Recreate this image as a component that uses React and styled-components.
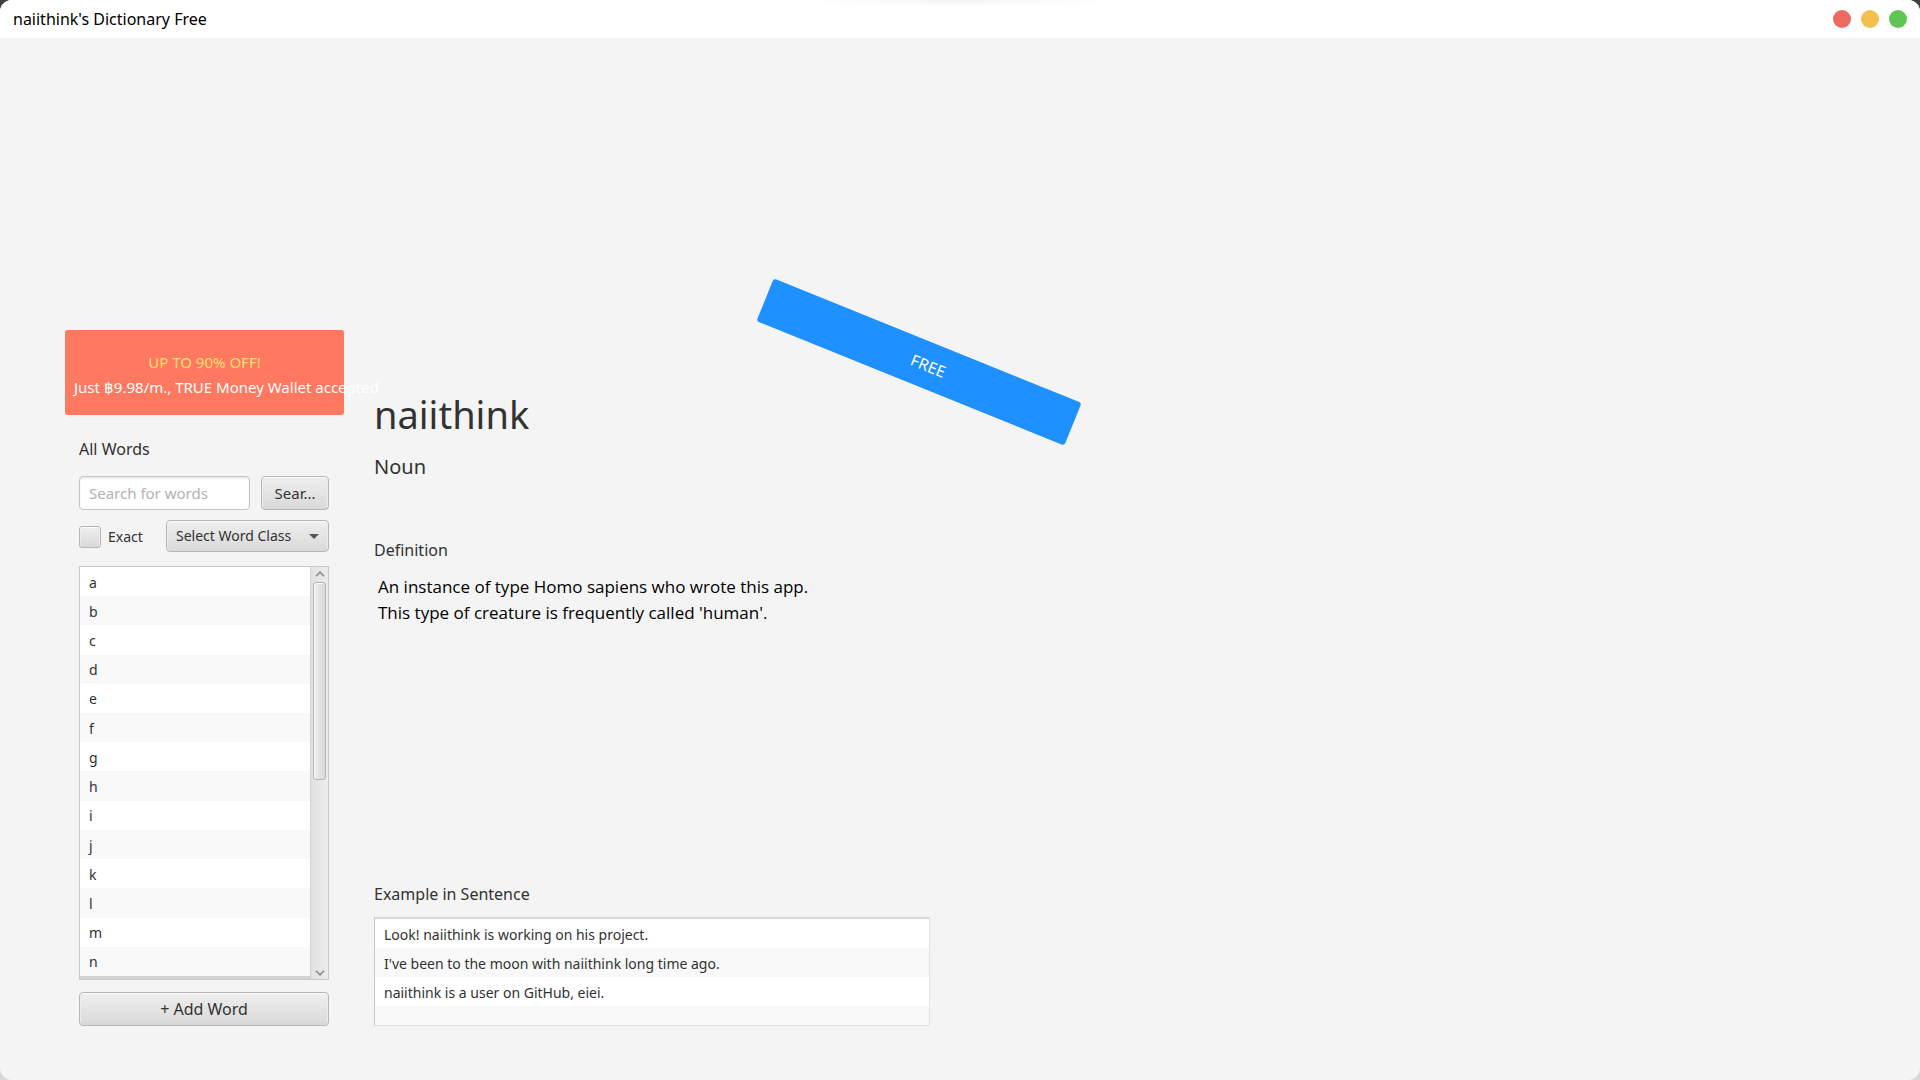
import React, { useState } from "react";
import styled, { createGlobalStyle } from "styled-components";

const GlobalStyle = createGlobalStyle`
  *, *::before, *::after { box-sizing: border-box; }
  body {
    margin: 0;
    background: linear-gradient(#3c3f43 50%, #d8d8d8 50%);
    color: #323232;
    font: 14px/20px "Noto Sans", "Open Sans", sans-serif;
  }
  button, input, select { font: inherit; color: inherit; margin: 0; }
  h1, h2, p, ul { margin: 0; padding: 0; font-weight: 400; }
  ul { list-style: none; }
`;

const Window = styled.div`
  min-height: 100vh;
  display: flex;
  flex-direction: column;
  background: #f4f4f4;
  border-radius: 12px;
  overflow: hidden;
`;

const TitleBar = styled.header`
  height: 38px;
  flex: none;
  display: flex;
  align-items: center;
  justify-content: space-between;
  padding: 0 13px;
  color: #000;
  background:
    radial-gradient(ellipse 160px 6px at 50% 0, #f3f3f3, #fff) no-repeat,
    #fff;
`;

const AppTitle = styled.span`
  font-size: 16px;
  line-height: 24px;
`;

const WindowControls = styled.div`
  display: flex;
  gap: 10px;
`;

const ControlDot = styled.button`
  width: 18px;
  height: 18px;
  padding: 0;
  border: 0;
  border-radius: 50%;
  background: ${(p) => p.$color};
`;

const Main = styled.main`
  flex: 1;
  display: flex;
  align-items: flex-end;
  gap: 30px;
  padding: 0 65px 54px;
`;

const Sidebar = styled.aside`
  width: 279px;
  flex: none;
`;

const Promo = styled.section`
  height: 85px;
  padding: 20px 9px 0;
  border-radius: 3px;
  background: #ff7860;
  color: #fff;
  font-size: 15px;
  line-height: 25px;
  white-space: nowrap;
`;

const PromoHeadline = styled.p`
  color: #ffde6e;
  text-align: center;
`;

const SidePanel = styled.div`
  display: flex;
  flex-direction: column;
  padding: 22px 15px 0 14px;
`;

const SectionTitle = styled.h2`
  font-size: 16px;
  line-height: 24px;
`;

const SearchRow = styled.form`
  display: flex;
  gap: 11px;
  margin-top: 15px;
`;

const SearchInput = styled.input`
  flex: 1;
  min-width: 0;
  height: 34px;
  padding: 0 9px;
  border: 1px solid #c4c4c4;
  border-radius: 4px;
  background: #fff;
  box-shadow: inset 0 2px 2px #ededed;
  font-size: 15px;
  &::placeholder { color: #b2b2b2; opacity: 1; }
`;

const raised = `
  border: 1px solid #b6b6b6;
  border-radius: 4px;
  background: linear-gradient(#efefef, #d9d9d9);
  box-shadow: inset 0 1px 0 #fbfbfb, inset 1px 0 0 #ececec, inset -1px 0 0 #ececec;
`;

const Button = styled.button`
  ${raised}
  width: ${(p) => (p.$wide ? "100%" : "68px")};
  height: 34px;
  padding: 0;
  margin-top: ${(p) => (p.$wide ? "12px" : "0")};
  font-size: ${(p) => (p.$wide ? "16px" : "15px")};
`;

const FilterRow = styled.div`
  display: flex;
  align-items: center;
  justify-content: space-between;
  margin: 10px 0 14px;
`;

const CheckLabel = styled.label`
  display: flex;
  align-items: center;
  gap: 7px;
  padding-top: 2px;
`;

const Checkbox = styled.input`
  ${raised}
  appearance: none;
  width: 22px;
  height: 22px;
  border-radius: 3px;
  &:checked { background: #8a8a8a; }
`;

const SelectBox = styled.div`
  display: grid;
  width: 163px;
  align-items: center;
  > * { grid-area: 1 / 1; }
`;

const Select = styled.select`
  ${raised}
  appearance: none;
  width: 100%;
  height: 32px;
  padding: 0 30px 0 9px;
`;

const SelectArrow = styled.svg`
  justify-self: end;
  margin-right: 10px;
  pointer-events: none;
`;

const WordPane = styled.div`
  display: flex;
  height: 414px;
  border: 1px solid #c8c8c8;
  background: #fff;
`;

const WordList = styled.ul`
  flex: 1;
  display: grid;
  grid-auto-rows: 1fr;
  border-bottom: 3px solid #d3d3d3;
`;

const Row = styled.li`
  display: flex;
  align-items: center;
  padding: 2px 0 0 9px;
  background: #fff;
  &:nth-child(even) { background: #f9f9f9; }
`;

const ScrollBar = styled.div`
  width: 18px;
  display: flex;
  flex-direction: column;
  align-items: center;
  justify-content: space-between;
  padding: 4px 0 3px;
  border-left: 1px solid #d3d3d3;
  background: linear-gradient(90deg, #e2e2e2, #ececec);
`;

const ScrollTrack = styled.div`
  flex: 1;
  padding-top: 5px;
`;

const ScrollThumb = styled.div`
  width: 13px;
  height: 198px;
  border: 1px solid #b4b4b4;
  border-radius: 3px;
  background: linear-gradient(90deg, #f0f0f0, #d9d9d9);
  box-shadow: inset 1px 1px 0 #fafafa;
`;

const Detail = styled.article`
  flex: 0 1 556px;
  position: relative;
`;

const Word = styled.h1`
  font-size: 38px;
  line-height: 52px;
`;

const WordClass = styled.p`
  margin: 13px 0 57px;
  font-size: 20px;
  line-height: 28px;
`;

const Definition = styled.p`
  min-height: 320px;
  padding: 12px 0 0 4px;
  color: #000;
  font-family: "Open Sans", "Noto Sans", sans-serif;
  font-size: 17px;
  line-height: 26px;
  white-space: pre-line;
`;

const ExampleList = styled.ul`
  height: 109px;
  margin-top: 11px;
  display: grid;
  grid-template-rows: repeat(3, 29px) 1fr;
  border: 1px solid #e2e2e2;
  border-top: 2px solid #d9d9d9;
  border-left-color: #c8c8c8;
`;

const Ribbon = styled.div`
  position: absolute;
  top: -49px;
  left: 379px;
  width: 332px;
  height: 46px;
  display: flex;
  align-items: center;
  justify-content: center;
  padding-left: 20px;
  border-radius: 3px;
  background: #1e90ff;
  color: #fff;
  font-size: 16px;
  transform: rotate(22deg);
`;

const CONTROLS = [
  ["Close", "#ec6a5e"],
  ["Minimize", "#f4bf4f"],
  ["Maximize", "#61c554"],
];

const WORDS = "abcdefghijklmn".split("");

const EXAMPLES = [
  "Look! naiithink is working on his project.",
  "I've been to the moon with naiithink long time ago.",
  "naiithink is a user on GitHub, eiei.",
];

const DEFINITION =
  "An instance of type Homo sapiens who wrote this app.\nThis type of creature is frequently called 'human'.";

function Chevron({ down }) {
  return (
    <svg width="10" height="6" viewBox="0 0 10 6" fill="none" stroke="#8a8a8a" strokeWidth="1.6">
      <path d={down ? "M1 0.8 5 4.8 9 0.8" : "M1 5.2 5 1.2 9 5.2"} />
    </svg>
  );
}

export default function App() {
  const [query, setQuery] = useState("");
  return (
    <>
      <GlobalStyle />
      <Window>
        <TitleBar>
          <AppTitle>naiithink's Dictionary Free</AppTitle>
          <WindowControls>
            {CONTROLS.map(([name, color]) => (
              <ControlDot key={name} type="button" aria-label={name} $color={color} />
            ))}
          </WindowControls>
        </TitleBar>
        <Main>
          <Sidebar>
            <Promo>
              <PromoHeadline>UP TO 90% OFF!</PromoHeadline>
              <p>Just ฿9.98/m., TRUE Money Wallet accepted</p>
            </Promo>
            <SidePanel>
              <SectionTitle>All Words</SectionTitle>
              <SearchRow onSubmit={(e) => e.preventDefault()}>
                <SearchInput
                  aria-label="Search for words"
                  placeholder="Search for words"
                  value={query}
                  onChange={(e) => setQuery(e.target.value)}
                />
                <Button type="submit">Sear...</Button>
              </SearchRow>
              <FilterRow>
                <CheckLabel>
                  <Checkbox type="checkbox" />
                  Exact
                </CheckLabel>
                <SelectBox>
                  <Select aria-label="Word class">
                    <option>Select Word Class</option>
                  </Select>
                  <SelectArrow width="10" height="5" viewBox="0 0 10 5">
                    <path d="M0 0H10L5 5Z" fill="#555" />
                  </SelectArrow>
                </SelectBox>
              </FilterRow>
              <WordPane>
                <WordList>
                  {WORDS.map((w) => (
                    <Row key={w}>{w}</Row>
                  ))}
                </WordList>
                <ScrollBar>
                  <Chevron />
                  <ScrollTrack>
                    <ScrollThumb />
                  </ScrollTrack>
                  <Chevron down />
                </ScrollBar>
              </WordPane>
              <Button type="button" $wide>+ Add Word</Button>
            </SidePanel>
          </Sidebar>
          <Detail>
            <Word>naiithink</Word>
            <WordClass>Noun</WordClass>
            <SectionTitle>Definition</SectionTitle>
            <Definition>{DEFINITION}</Definition>
            <SectionTitle>Example in Sentence</SectionTitle>
            <ExampleList>
              {EXAMPLES.map((s) => (
                <Row key={s}>{s}</Row>
              ))}
              <Row />
            </ExampleList>
            <Ribbon>FREE</Ribbon>
          </Detail>
        </Main>
      </Window>
    </>
  );
}
